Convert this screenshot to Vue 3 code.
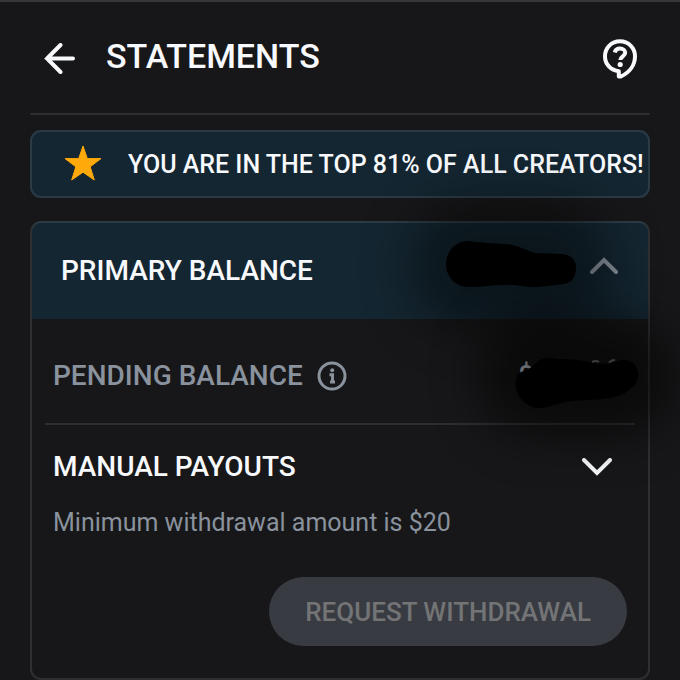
<template>
  <main class="page">
    <header class="topbar">
      <button class="icon-button" type="button" aria-label="Back">
        <svg width="32" height="32" viewBox="0 0 32 32" class="stroke-icon">
          <path d="M29 15.500H3M16.500 2L3 15.500l13.500 13.500" />
        </svg>
      </button>
      <h1 class="title">STATEMENTS</h1>
      <button class="icon-button" type="button" aria-label="Help">
        <svg width="36" height="42" viewBox="0 0 36 42" class="stroke-icon">
          <path d="M18 3.200C9.500 3.200 3 9.800 3 18.200c0 8 5.800 14.200 13.800 15v5.300h2C27.500 34.500 33 27 33 18.200c0-8.400-6.600-15-15-15z" stroke-linejoin="round" />
          <path d="M12.800 14.500c.5-2.500 2.500-3.900 5.200-3.900 3 0 5.200 1.600 5.200 4.200 0 3.400-4.900 3.600-4.900 7.200" stroke-linecap="butt" />
          <circle class="dot" cx="18.200" cy="26.500" r="2.600" />
        </svg>
      </button>
    </header>

    <section class="banner">
      <svg class="star" width="38" height="36" viewBox="0 0 38 36">
        <path d="M19 1l4.300 12.600H37L26.200 21.800 30.300 35 19 27.200 7.700 35l4.100-13.200L1 13.600h13.700z" />
      </svg>
      <p class="banner-text">YOU ARE IN THE TOP 81% OF ALL CREATORS!</p>
    </section>

    <section class="card">
      <button class="card-head" type="button" :aria-expanded="balanceOpen" @click="balanceOpen = !balanceOpen">
        <span class="card-title">PRIMARY BALANCE</span>
        <span class="amount primary-amount">
          <svg class="scribble" width="130" height="46" viewBox="0 0 130 46">
            <path d="M0 22C1 8 11 0 23 0c14 2 24 2 34 3 14 0 23 7 33 9l26 1c9 1 14 6 14 14 0 10-5 15-13 16-11 1-21 3-32 3-9 0-15-3-25-2-14 0-26 2-38 2C9 46-1 34 0 22z" />
          </svg>
        </span>
        <svg width="28" height="18" viewBox="0 0 28 18" class="stroke-icon chevron" :class="{ flipped: !balanceOpen }">
          <path d="M2 15L14 3l12 12" />
        </svg>
      </button>

      <div v-if="balanceOpen" class="card-body">
        <div class="pending">
          <span class="pending-label">PENDING BALANCE</span>
          <svg width="30" height="30" viewBox="0 0 30 30" class="info">
            <circle cx="15" cy="15" r="13" />
            <path d="M12.500 13.700h3v7M13 21h5" />
            <circle class="dot" cx="15.200" cy="9.200" r="2" />
          </svg>
          <span class="amount pending-amount">
            <span class="currency">$</span>
            <svg class="scribble" width="124" height="52" viewBox="0 0 124 52">
              <path class="digit-top" d="M77 5q4-2 7 0M94 6q2-3 6-3" />
              <path d="M2 19C6 13 14 13 19 8 27-1 35 0 43 2c13 0 27 1 39 5 8 1 17-2 24-4 10-1 17 4 17 15 0 9-8 15-15 19-16 7-36 5-51 7-11 1-21 6-32 7C11 52-4 36 2 19z" />
            </svg>
          </span>
        </div>

        <div class="payouts">
          <button class="payouts-toggle" type="button">
            <span>MANUAL PAYOUTS</span>
            <svg width="30" height="18" viewBox="0 0 30 18" class="stroke-icon">
              <path d="M2 2l13 13L28 2" />
            </svg>
          </button>
          <p class="note">Minimum withdrawal amount is $20</p>
          <button class="withdraw" type="button" disabled>REQUEST WITHDRAWAL</button>
        </div>
      </div>
    </section>
  </main>
</template>

<script setup>
import { ref } from 'vue';

const balanceOpen = ref(true);
</script>

<style>
body {
  background: #171719;
}
</style>

<style scoped>
* {
  box-sizing: border-box;
}
.page {
  padding: 0 30px;
  border-top: 2px solid #37373a;
  overflow: hidden;
  color: #f7f9fc;
  font-family: Roboto, "Liberation Sans", sans-serif;
  font-weight: 500;
}
button {
  padding: 0;
  border: 0;
  background: none;
  color: inherit;
  font: inherit;
  text-align: left;
}
h1,
p {
  margin: 0;
}
svg {
  display: block;
  flex-shrink: 0;
}
.stroke-icon {
  fill: none;
  stroke: currentColor;
  stroke-width: 4;
  stroke-linecap: round;
}
.dot {
  fill: currentColor;
  stroke: none;
}

.topbar {
  display: flex;
  align-items: center;
  gap: 30px;
  height: 113px;
  padding: 2px 12px 0 14px;
  border-bottom: 2px solid #2d2e30;
}
.title {
  flex: 1;
  padding-bottom: 6px;
  font-size: 34px;
  line-height: 40px;
  font-weight: 500;
}

.banner {
  display: flex;
  align-items: center;
  gap: 26px;
  height: 68px;
  margin-top: 15px;
  padding: 0 4px 2px 32px;
  border: 2px solid #2b3b46;
  border-radius: 11px;
  background: #142631;
}
.star {
  fill: #ffa90a;
  stroke: #ffa90a;
  stroke-linejoin: round;
}
.banner-text {
  padding-top: 3px;
  font-size: 25px;
  line-height: 32px;
  white-space: nowrap;
}

.card {
  margin-top: 23px;
  border: 2px solid #2d2f32;
  border-radius: 11px;
}
.card-head {
  display: flex;
  align-items: center;
  gap: 14px;
  width: 100%;
  height: 96px;
  padding: 0 30px 10px 29px;
  border-radius: 9px 9px 0 0;
  background: #142631;
  box-shadow: 0 -2px #2b3b46;
  font-size: 28px;
}
.card-title {
  flex: 1;
  padding-top: 8px;
}
.chevron {
  color: #8d949e;
}
.flipped {
  transform: rotate(180deg);
}

.amount {
  position: relative;
  z-index: 1;
}
/* soft dark halo around the hidden figures */
.amount::before {
  content: "";
  position: absolute;
  inset: -40px -36px;
  border-radius: 60px;
  background: rgba(0, 0, 0, 0.42);
  filter: blur(24px);
}
.primary-amount {
  padding-bottom: 4px;
}
.scribble {
  position: relative;
}

.card-body {
  padding: 0 13px;
}
.pending {
  display: flex;
  align-items: center;
  gap: 14px;
  height: 106px;
  padding: 9px 0 0 8px;
  border-bottom: 2px solid #2d2e30;
  color: #89929d;
  font-size: 28px;
}
.pending-amount {
  height: 38px;
  margin: 0 -4px 0 auto;
}
.pending-amount::before {
  background: rgba(0, 0, 0, 0.56);
}
.currency {
  position: absolute;
  top: 2px;
  left: 3px;
  color: #66696e;
}
.digit-top {
  fill: none;
  stroke: #3a3b3d;
  stroke-width: 2;
}
.info {
  fill: none;
  stroke: currentColor;
  stroke-width: 3;
}

.payouts {
  display: flex;
  flex-direction: column;
  padding: 24px 8px 32px;
}
.payouts-toggle {
  display: flex;
  align-items: center;
  justify-content: space-between;
  padding-right: 15px;
  font-size: 28px;
  line-height: 36px;
}
.note {
  margin-top: 22px;
  color: #89929d;
  font-size: 25px;
  line-height: 32px;
  font-weight: 400;
}
.withdraw {
  align-self: flex-end;
  height: 69px;
  margin-top: 38px;
  padding: 0 36px;
  border-radius: 35px;
  background: #393b43;
  color: #737475;
  font-size: 26px;
}
</style>
